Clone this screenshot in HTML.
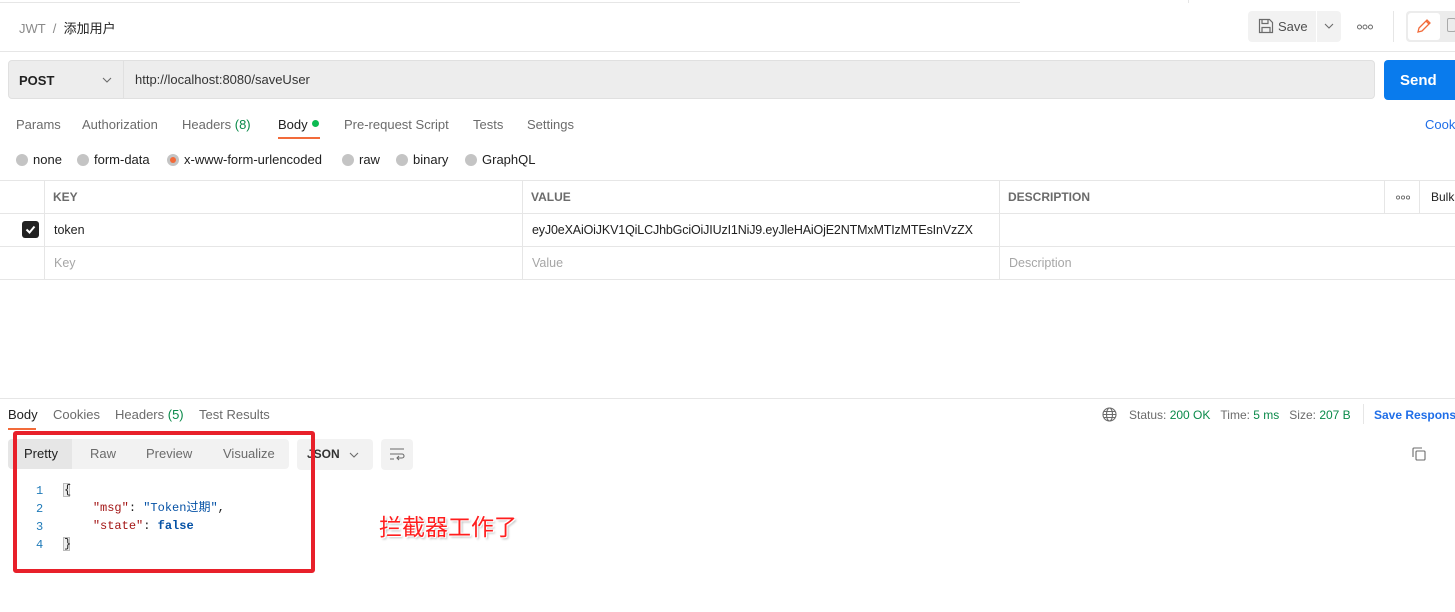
<!DOCTYPE html>
<html><head><meta charset="utf-8"><style>
*{box-sizing:border-box;margin:0;padding:0}
body{width:1455px;height:612px;background:#fff;font-family:"Liberation Sans","Noto Sans CJK SC",sans-serif;font-size:12.5px;color:#212121;position:relative;overflow:hidden}
.a{position:absolute;white-space:nowrap}
.g{color:#6b6b6b}
.line{position:absolute;background:#e6e6e6}
.rad{position:absolute;width:12px;height:12px;border-radius:50%;background:#c4c4c4;top:154px}
.mono{font-family:"Liberation Mono","Noto Sans CJK SC",monospace;font-size:12px}
.r{font-size:13px;top:152px}
</style></head><body>
<div class="line" style="left:0;top:2px;width:1020px;height:1px"></div>
<div class="line" style="left:1188px;top:0;width:1px;height:3px"></div>
<div class="a" style="left:19px;top:18px;font-size:13px"><span style="color:#8a8a8a">JWT</span> <span style="color:#8a8a8a">&nbsp;/&nbsp;</span> <span style="color:#212121">添加用户</span></div>
<div class="line" style="left:0;top:51px;width:1455px;height:1px"></div>
<div class="a" style="left:1248px;top:11px;width:68px;height:31px;background:#f2f2f2;border-radius:4px 0 0 4px"></div>
<svg class="a" style="left:1258px;top:18px" width="16" height="16" viewBox="0 0 16 16" fill="none" stroke="#6b6b6b" stroke-width="1.2"><path d="M1.5 1.5h10l3 3v10h-13z"/><path d="M4 1.5v4h6v-4M4 14.5v-5h8v5"/></svg>
<div class="a" style="left:1278px;top:19px;font-size:13px;color:#505050">Save</div>
<div class="a" style="left:1317px;top:11px;width:24px;height:31px;background:#f2f2f2;border-radius:0 4px 4px 0"></div>
<svg class="a" style="left:1324px;top:22px" width="10" height="8" viewBox="0 0 10 8"><path d="M1 2l4 4 4-4" fill="none" stroke="#6b6b6b" stroke-width="1.1"/></svg>
<svg class="a" style="left:1357px;top:24px" width="16" height="6" viewBox="0 0 16 6" fill="none" stroke="#6b6b6b" stroke-width="1"><circle cx="2.5" cy="3" r="2"/><circle cx="8" cy="3" r="2"/><circle cx="13.5" cy="3" r="2"/></svg>
<div class="line" style="left:1393px;top:11px;width:1px;height:31px"></div>
<div class="a" style="left:1406px;top:11px;width:60px;height:31px;background:#ececec;border-radius:4px"></div>
<div class="a" style="left:1408px;top:13px;width:32px;height:27px;background:#fff;border-radius:3px"></div>
<svg class="a" style="left:1416px;top:18px" width="16" height="16" viewBox="0 0 16 16" fill="none" stroke="#f26b3a" stroke-width="1.3"><path d="M2 14l1-4 8-8 3 3-8 8z M10 3l3 3"/></svg>
<div class="a" style="left:1447px;top:18px;width:9px;height:14px;border:1.2px solid #aaa;border-radius:2px"></div>

<div class="a" style="left:8px;top:60px;width:1367px;height:39px;background:#ededed;border:1px solid #e0e0e0;border-radius:4px"></div>
<div class="a" style="left:123px;top:61px;width:1px;height:37px;background:#e0e0e0"></div>
<div class="a" style="left:19px;top:73px;font-weight:bold;font-size:13px;color:#212121">POST</div>
<svg class="a" style="left:102px;top:76px" width="10" height="8" viewBox="0 0 10 8"><path d="M1 2l4 4 4-4" fill="none" stroke="#6b6b6b" stroke-width="1.1"/></svg>
<div class="a" style="left:135px;top:72px;font-size:13px;color:#333">http://localhost:8080/saveUser</div>
<div class="a" style="left:1384px;top:60px;width:80px;height:40px;background:#097bed;border-radius:4px"></div>
<div class="a" style="left:1400px;top:72px;font-size:15px;font-weight:bold;color:#fff">Send</div>

<div class="a g" style="left:16px;top:117px;font-size:13px">Params</div>
<div class="a g" style="left:82px;top:117px;font-size:13px">Authorization</div>
<div class="a g" style="left:182px;top:117px;font-size:13px">Headers <span style="color:#0a8a4a">(8)</span></div>
<div class="a" style="left:278px;top:117px;font-size:13px">Body</div>
<div class="a" style="left:312px;top:120px;width:7px;height:7px;border-radius:50%;background:#0cbb52"></div>
<div class="a" style="left:278px;top:137px;width:42px;height:2px;background:#f26b3a"></div>
<div class="a g" style="left:344px;top:117px;font-size:13px">Pre-request Script</div>
<div class="a g" style="left:473px;top:117px;font-size:13px">Tests</div>
<div class="a g" style="left:527px;top:117px;font-size:13px">Settings</div>
<div class="a" style="left:1425px;top:117px;font-size:13px;color:#1f6ee8">Cookies</div>

<div class="rad" style="left:16px"></div><div class="a r" style="left:33px">none</div>
<div class="rad" style="left:77px"></div><div class="a r" style="left:94px">form-data</div>
<div class="rad" style="left:167px"></div><div class="a" style="left:170px;top:157px;width:6px;height:6px;border-radius:50%;background:#f26b3a"></div><div class="a r" style="left:184px">x-www-form-urlencoded</div>
<div class="rad" style="left:342px"></div><div class="a r" style="left:359px">raw</div>
<div class="rad" style="left:396px"></div><div class="a r" style="left:413px">binary</div>
<div class="rad" style="left:465px"></div><div class="a r" style="left:482px">GraphQL</div>

<div class="line" style="left:0;top:180px;width:1455px;height:1px"></div>
<div class="line" style="left:0;top:213px;width:1455px;height:1px"></div>
<div class="line" style="left:0;top:246px;width:1455px;height:1px"></div>
<div class="line" style="left:0;top:279px;width:1455px;height:1px"></div>
<div class="line" style="left:44px;top:180px;width:1px;height:99px"></div>
<div class="line" style="left:522px;top:180px;width:1px;height:99px"></div>
<div class="line" style="left:999px;top:180px;width:1px;height:99px"></div>
<div class="line" style="left:1384px;top:180px;width:1px;height:33px"></div>
<div class="line" style="left:1419px;top:180px;width:1px;height:33px"></div>
<div class="a" style="left:53px;top:190px;font-weight:bold;font-size:12px;color:#6b6b6b">KEY</div>
<div class="a" style="left:531px;top:190px;font-weight:bold;font-size:12px;color:#6b6b6b">VALUE</div>
<div class="a" style="left:1008px;top:190px;font-weight:bold;font-size:12px;color:#6b6b6b">DESCRIPTION</div>
<svg class="a" style="left:1396px;top:195px" width="14" height="5" viewBox="0 0 14 5" fill="none" stroke="#6b6b6b" stroke-width="0.9"><circle cx="2" cy="2.5" r="1.6"/><circle cx="7" cy="2.5" r="1.6"/><circle cx="12" cy="2.5" r="1.6"/></svg>
<div class="a" style="left:1431px;top:190px;font-size:12px">Bulk Edit</div>
<div class="a" style="left:22px;top:221px;width:17px;height:17px;background:#212121;border-radius:3px"></div>
<svg class="a" style="left:24px;top:223px" width="13" height="13" viewBox="0 0 13 13"><path d="M2.5 6.5l3 3 5-6" fill="none" stroke="#fff" stroke-width="2"/></svg>
<div class="a" style="left:54px;top:223px">token</div>
<div class="a" style="left:532px;top:223px;letter-spacing:-0.15px">eyJ0eXAiOiJKV1QiLCJhbGciOiJIUzI1NiJ9.eyJleHAiOjE2NTMxMTIzMTEsInVzZX</div>
<div class="a" style="left:54px;top:256px;color:#a6a6a6">Key</div>
<div class="a" style="left:532px;top:256px;color:#a6a6a6">Value</div>
<div class="a" style="left:1009px;top:256px;color:#a6a6a6">Description</div>

<div class="line" style="left:0;top:398px;width:1455px;height:1px"></div>
<div class="a" style="left:8px;top:407px;font-size:13px">Body</div>
<div class="a" style="left:8px;top:428px;width:28px;height:2px;background:#f26b3a"></div>
<div class="a g" style="left:53px;top:407px;font-size:13px">Cookies</div>
<div class="a g" style="left:115px;top:407px;font-size:13px">Headers <span style="color:#0a8a4a">(5)</span></div>
<div class="a g" style="left:199px;top:407px;font-size:13px">Test Results</div>
<svg class="a" style="left:1102px;top:407px" width="15" height="15" viewBox="0 0 15 15" fill="none" stroke="#6b6b6b" stroke-width="1.1"><circle cx="7.5" cy="7.5" r="6.5"/><ellipse cx="7.5" cy="7.5" rx="3" ry="6.5"/><path d="M1 7.5h13M2 4.5h11M2 10.5h11"/></svg>
<div class="a g" style="left:1129px;top:408px;font-size:12px">Status: <span style="color:#0a8a4a">200 OK</span>&nbsp;&nbsp;&nbsp;Time: <span style="color:#0a8a4a">5 ms</span>&nbsp;&nbsp;&nbsp;Size: <span style="color:#0a8a4a">207 B</span></div>
<div class="line" style="left:1363px;top:404px;width:1px;height:20px"></div>
<div class="a" style="left:1374px;top:408px;font-size:12px;font-weight:bold;color:#1f6ee8">Save Response</div>

<div class="a" style="left:8px;top:439px;width:281px;height:30px;background:#f2f2f2;border-radius:4px"></div>
<div class="a" style="left:8px;top:439px;width:64px;height:30px;background:#e6e6e6;border-radius:4px 0 0 4px"></div>
<div class="a" style="left:24px;top:446px;font-size:13px">Pretty</div>
<div class="a g" style="left:90px;top:446px;font-size:13px">Raw</div>
<div class="a g" style="left:146px;top:446px;font-size:13px">Preview</div>
<div class="a g" style="left:223px;top:446px;font-size:13px">Visualize</div>
<div class="a" style="left:297px;top:439px;width:76px;height:31px;background:#f2f2f2;border-radius:4px"></div>
<div class="a" style="left:307px;top:447px;font-size:12px;font-weight:bold;color:#333">JSON</div>
<svg class="a" style="left:349px;top:451px" width="10" height="8" viewBox="0 0 10 8"><path d="M1 2l4 4 4-4" fill="none" stroke="#6b6b6b" stroke-width="1.1"/></svg>
<div class="a" style="left:381px;top:439px;width:32px;height:31px;background:#f2f2f2;border-radius:4px"></div>
<svg class="a" style="left:388px;top:446px" width="18" height="16" viewBox="0 0 18 16" fill="none" stroke="#6b6b6b" stroke-width="1.1"><path d="M2 3h14M2 8h12a2 2 0 010 4H9M11 10l-2 2 2 2M2 13h4"/></svg>
<svg class="a" style="left:1411px;top:446px" width="16" height="16" viewBox="0 0 16 16" fill="none" stroke="#6b6b6b" stroke-width="1.1"><rect x="5" y="5" width="9" height="9" rx="1"/><path d="M2 11V3a1 1 0 011-1h8"/></svg>

<div class="a mono" style="left:36px;top:482px;color:#1f7ab8;line-height:18px">1<br>2<br>3<br>4</div>
<div class="a" style="left:63px;top:483px;width:7px;height:14px;background:#eee;border:1px solid #bbb"></div>
<div class="a" style="left:63px;top:537px;width:7px;height:14px;background:#eee;border:1px solid #bbb"></div>
<div class="a mono" style="left:64px;top:481px;line-height:18px">{<br>&nbsp;&nbsp;&nbsp;&nbsp;<span style="color:#a31515">"msg"</span>: <span style="color:#0451a5">"Token过期"</span>,<br>&nbsp;&nbsp;&nbsp;&nbsp;<span style="color:#a31515">"state"</span>: <span style="color:#0451a5;font-weight:bold">false</span><br>}</div>

<div class="a" style="left:13px;top:431px;width:302px;height:142px;border:4px solid #e8202a;border-radius:3px"></div>
<div class="a" style="left:379px;top:508px;font-size:23px;color:#ff1e1e;font-family:'Noto Sans CJK SC',sans-serif;text-shadow:1px 1px 0 #fff,-1px -1px 0 #fff,2px 2px 2px #bbb">拦截器工作了</div>
</body></html>
